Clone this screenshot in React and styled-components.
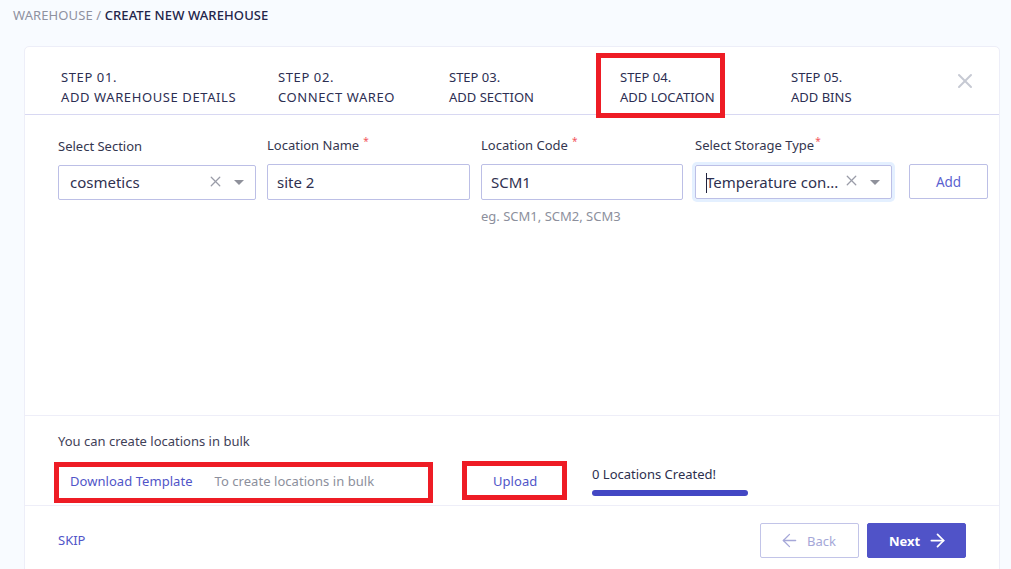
import React from 'react';
import styled, { createGlobalStyle } from 'styled-components';
import { ArrowLeft, ArrowRight, X } from 'lucide-react';

const steps = [
  { no: '01', title: 'ADD WAREHOUSE DETAILS', width: 217, spaced: true },
  { no: '02', title: 'CONNECT WAREO', width: 171, spaced: true },
  { no: '03', title: 'ADD SECTION', width: 171 },
  { no: '04', title: 'ADD LOCATION', width: 171, marked: true },
  { no: '05', title: 'ADD BINS', width: 150 },
];

export default function App() {
  return (
    <>
      <GlobalStyle />
      <Page>
        <Breadcrumb>
          WAREHOUSE / <strong>CREATE NEW WAREHOUSE</strong>
        </Breadcrumb>

        <Card>
          <Steps>
            {steps.map((step) => (
              <Step key={step.no} width={step.width} $spaced={step.spaced}>
                {step.marked && <StepMark />}
                <div>STEP {step.no}.</div>
                <div>{step.title}</div>
              </Step>
            ))}
            <CloseButton>
              <X size={24} strokeWidth={2} />
            </CloseButton>
          </Steps>

          <FormArea>
            <SectionField width={198}>
              <Label>Select Section</Label>
              <SelectBox>
                <SelectValue>cosmetics</SelectValue>
                <ClearIcon size={17} strokeWidth={1.8} />
                <Caret />
              </SelectBox>
            </SectionField>
            <Field width={203}>
              <Label>
                Location Name<Req>*</Req>
              </Label>
              <TextBox>site 2</TextBox>
            </Field>
            <Field width={202}>
              <Label>
                Location Code<Req>*</Req>
              </Label>
              <TextBox>SCM1</TextBox>
              <Hint>eg. SCM1, SCM2, SCM3</Hint>
            </Field>
            <StorageField width={197}>
              <Label>
                Select Storage Type<Req $tight>*</Req>
              </Label>
              <SelectBox $focused>
                <Cursor />
                <SelectValue>Temperature con...</SelectValue>
                <ClearIcon size={17} strokeWidth={1.8} />
                <Caret />
              </SelectBox>
            </StorageField>
            <AddButton>Add</AddButton>
          </FormArea>

          <BulkArea>
            <BulkNote>You can create locations in bulk</BulkNote>
            <BulkRow>
              <TemplateCell>
                <Mark />
                <LinkText>Download Template</LinkText>
                <MutedText>To create locations in bulk</MutedText>
              </TemplateCell>
              <UploadCell>
                <Mark />
                <LinkText>Upload</LinkText>
              </UploadCell>
              <ProgressCell>
                <ProgressText>0 Locations Created!</ProgressText>
                <ProgressBar />
              </ProgressCell>
            </BulkRow>
          </BulkArea>

          <Footer>
            <SkipLink>SKIP</SkipLink>
            <FooterButtons>
              <BackButton>
                <BackArrow size={21} strokeWidth={1.5} />
                Back
              </BackButton>
              <NextButton>
                Next
                <NextArrow size={21} strokeWidth={2} />
              </NextButton>
            </FooterButtons>
          </Footer>
        </Card>
      </Page>
    </>
  );
}

const GlobalStyle = createGlobalStyle`
  html, body {
    margin: 0;
    height: 100%;
    overflow: hidden;
    background: #f8fbff;
  }

  body {
    font-family: 'Noto Sans', 'Open Sans', sans-serif;
    font-size: 13px;
    color: #2d2f4e;
  }
`;

const Page = styled.div`
  width: 1011px;
  height: 569px;
  overflow: hidden;
  padding: 6px 11px 0 24px;
  box-sizing: border-box;
`;

const Breadcrumb = styled.div`
  margin-left: -11px;
  height: 40px;
  line-height: 18px;
  font-size: 13px;
  letter-spacing: 0.1px;
  color: #8f919f;

  strong {
    font-weight: 500;
    color: #23254a;
  }
`;

const Card = styled.div`
  height: 540px;
  background: #fff;
  border: 1px solid #edeef8;
  border-radius: 5px 5px 0 0;
  box-sizing: border-box;
`;

const Steps = styled.div`
  display: flex;
  height: 68px;
  padding: 20px 0 0 36px;
  border-bottom: 1px solid #d8d8f2;
  box-sizing: border-box;
`;

const Step = styled.div`
  position: relative;
  width: ${(p) => p.width}px;
  font-size: 13px;
  line-height: 20px;
  color: #2c2e52;
  letter-spacing: ${(p) => (p.$spaced ? '0.6px' : '0')};
`;

const Mark = styled.span`
  position: absolute;
  border: 5px solid #ee1c25;
  box-sizing: border-box;
  pointer-events: none;
`;

const StepMark = styled(Mark)`
  left: -24px;
  top: -14px;
  width: 129px;
  height: 65px;
`;

const CloseButton = styled.div`
  margin: 2px 0 0 12px;
  height: 24px;
  display: flex;
  color: #c6c9d3;
`;

const FormArea = styled.div`
  display: flex;
  align-items: flex-start;
  gap: 11px;
  height: 301px;
  padding: 20px 0 0 33px;
  box-sizing: border-box;
  border-bottom: 1px solid #eeeef8;
`;

const Field = styled.div`
  width: ${(p) => p.width}px;
  flex: none;
`;

const SectionField = styled(Field)`
  margin-top: 1px;
`;

const StorageField = styled(Field)`
  margin-left: 1px;
`;

const Label = styled.div`
  height: 29px;
  line-height: 20px;
  font-size: 13px;
  color: #34364f;
`;

const Req = styled.sup`
  color: #f2545b;
  font-size: 10px;
  line-height: 0;
  margin-left: ${(p) => (p.$tight ? '1px' : '4px')};
`;

const TextBox = styled.div`
  height: 36px;
  line-height: 34px;
  padding-left: 9px;
  font-size: 15px;
  color: #2f3150;
  border: 1px solid #bcbfe6;
  border-radius: 2px;
  box-sizing: border-box;
`;

const SelectBox = styled.div`
  position: relative;
  display: flex;
  align-items: center;
  height: ${(p) => (p.$focused ? '34px' : '35px')};
  margin-top: ${(p) => (p.$focused ? '1px' : '0')};
  padding: 0 11px 0 ${(p) => (p.$focused ? '10px' : '11px')};
  font-size: 15px;
  line-height: 30px;
  color: #2f3150;
  border: 1px solid #bcbfe6;
  border-radius: 2px;
  box-sizing: border-box;
  box-shadow: ${(p) => (p.$focused ? '0 0 0 3px #e4f0ff' : 'none')};
`;

const Cursor = styled.span`
  position: absolute;
  left: 10px;
  top: 7px;
  width: 1px;
  height: 20px;
  background: #20223c;
`;

const SelectValue = styled.span`
  flex: 1;
  margin-top: -1px;
  white-space: nowrap;
  overflow: hidden;
`;

const ClearIcon = styled(X)`
  flex: none;
  margin: -3px 10px 0 0;
  color: #9a9ca8;
`;

const Caret = styled.span`
  flex: none;
  width: 0;
  height: 0;
  border-left: 5px solid transparent;
  border-right: 5px solid transparent;
  border-top: 5px solid #8f919b;
`;

const Hint = styled.div`
  margin-top: 7px;
  line-height: 18px;
  font-size: 13px;
  color: #8c8f9c;
`;

const AddButton = styled.button`
  flex: none;
  width: 79px;
  height: 35px;
  margin: 29px 0 0 6px;
  padding: 0;
  font: inherit;
  font-size: 13.5px;
  color: #5b5fd0;
  background: #fff;
  border: 1px solid #bcbfe6;
  border-radius: 2px;
`;

const BulkArea = styled.div`
  height: 90px;
  padding: 16px 0 0 33px;
  border-bottom: 1px solid #eeeef8;
  box-sizing: border-box;
`;

const BulkNote = styled.div`
  height: 40px;
  line-height: 18px;
  font-size: 13px;
  color: #3f4158;
`;

const BulkRow = styled.div`
  display: flex;
  align-items: flex-start;
`;

const TemplateCell = styled.div`
  position: relative;
  display: flex;
  gap: 22px;
  width: 404px;
  padding-left: 12px;
  height: 18px;
  line-height: 18px;
  box-sizing: border-box;

  ${Mark} {
    left: -4px;
    top: -10px;
    width: 379px;
    height: 41px;
  }
`;

const LinkText = styled.span`
  font-size: 13px;
  letter-spacing: 0.05px;
  color: #5155c8;
`;

const MutedText = styled.span`
  font-size: 13px;
  letter-spacing: 0.05px;
  color: #8c8f9c;
`;

const UploadCell = styled.div`
  position: relative;
  width: 130px;
  padding-left: 31px;
  height: 18px;
  line-height: 18px;
  box-sizing: border-box;

  ${Mark} {
    left: 0;
    top: -11px;
    width: 105px;
    height: 39px;
  }
`;

const ProgressCell = styled.div`
  width: 156px;
  margin-top: -7px;
`;

const ProgressText = styled.div`
  line-height: 18px;
  font-size: 13px;
  color: #2d2f4e;
`;

const ProgressBar = styled.div`
  height: 6px;
  margin-top: 7px;
  background: #4347c4;
  border-radius: 3px;
`;

const Footer = styled.div`
  display: flex;
  justify-content: space-between;
  padding: 17px 33px 0 33px;
`;

const SkipLink = styled.span`
  margin-top: 8px;
  line-height: 18px;
  font-size: 13px;
  color: #5155c8;
`;

const FooterButtons = styled.div`
  display: flex;
  gap: 8px;
`;

const BackButton = styled.button`
  display: flex;
  align-items: center;
  justify-content: center;
  gap: 7px;
  width: 99px;
  height: 35px;
  padding: 0;
  font: inherit;
  font-size: 13px;
  color: #a5a7d8;
  background: #fff;
  border: 1px solid #c2c4e8;
  border-radius: 2px;
`;

const NextButton = styled(BackButton)`
  font-weight: 700;
  color: #fff;
  background: #5053c8;
  border-color: #5053c8;
`;

const BackArrow = styled(ArrowLeft)`
  margin-left: -4px;
`;

const NextArrow = styled(ArrowRight)`
  margin-right: -4px;
`;
